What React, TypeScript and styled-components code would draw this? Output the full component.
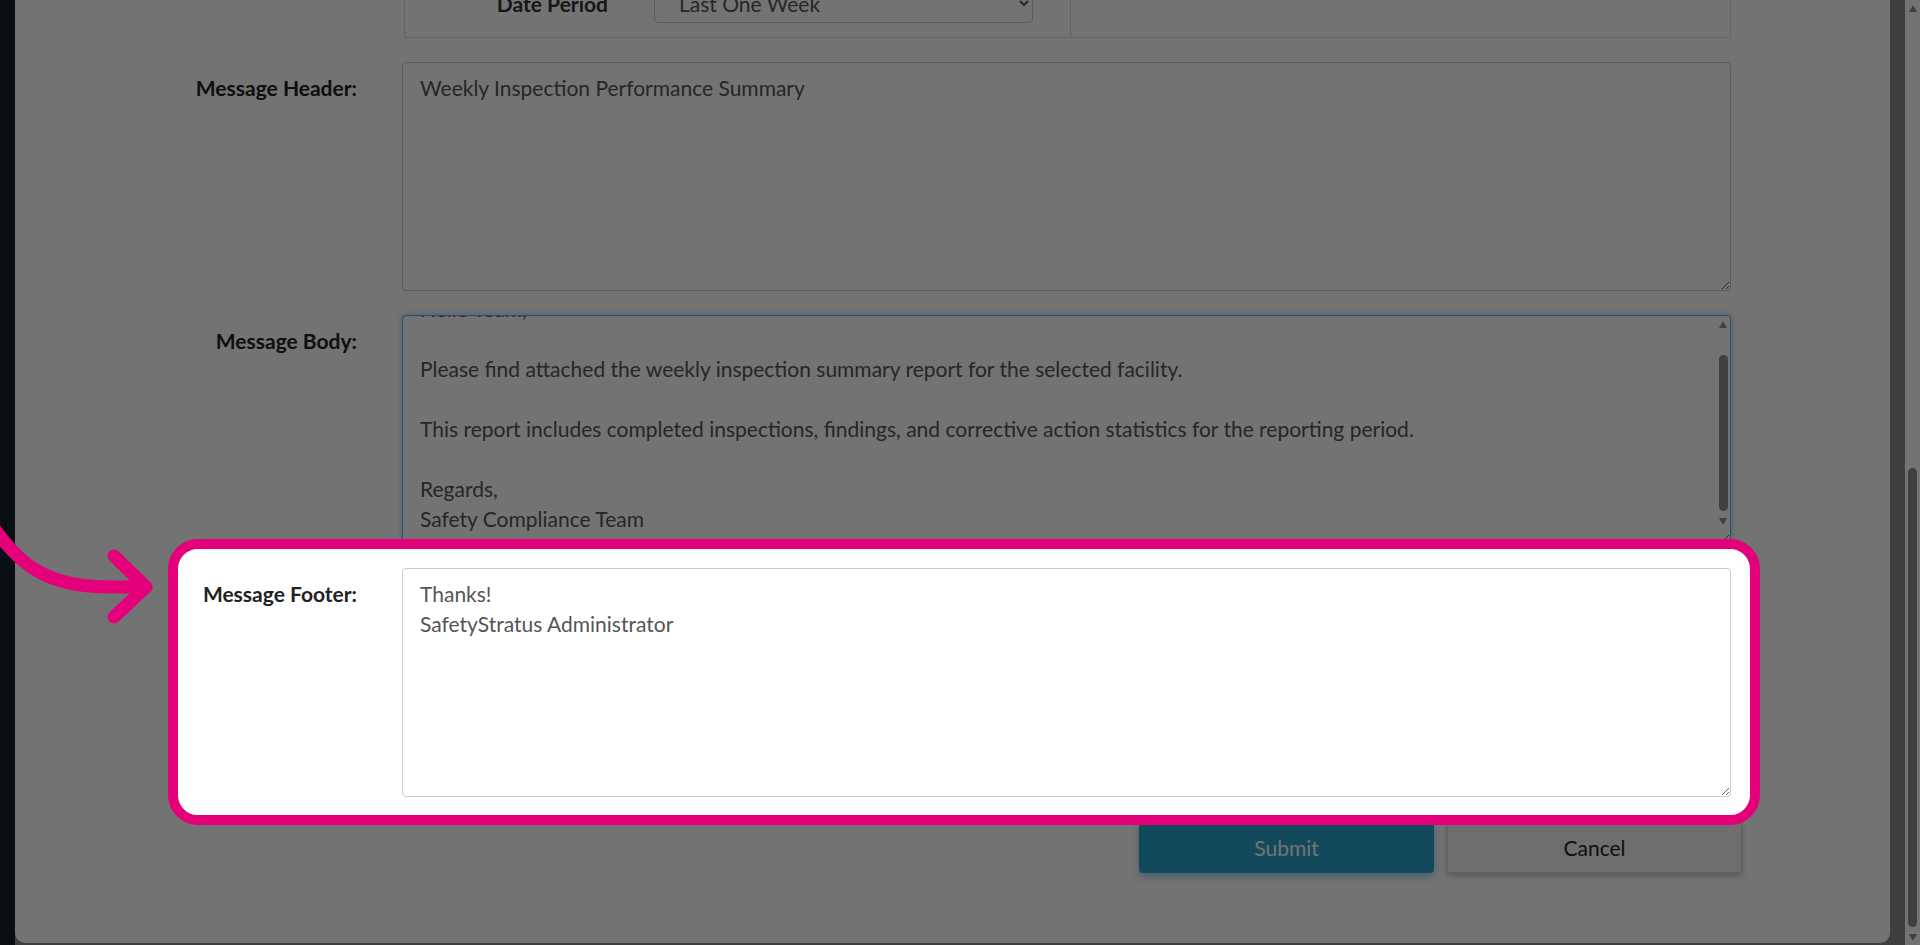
import * as React from 'react';
import styled, { createGlobalStyle, css } from 'styled-components';

const GlobalStyle = createGlobalStyle`
  html, body {
    margin: 0;
    overflow: hidden;
  }
  body {
    font-family: Lato, "Open Sans", "Liberation Sans", sans-serif;
  }
`;

const Shell = styled.div`
  display: flex;
  height: 100vh;
`;

// the page behind the modal: dark sidebar strip on the left, grey content on the right
const Viewport = styled.div`
  flex: 1;
  overflow-y: auto;
  scrollbar-width: none;
  background: linear-gradient(90deg, #17222b 0 15px, #8c8c8c 15px);
`;

const PageScrollbar = styled.div`
  flex: 0 0 15px;
  display: flex;
  flex-direction: column;
  align-items: center;
  background: #fff;
`;

const Arrow = styled.span<{ $down?: boolean; $color: string }>`
  flex: none;
  width: 0;
  height: 0;
  border-left: 4.5px solid transparent;
  border-right: 4.5px solid transparent;
  ${(p) =>
    p.$down
      ? css`
          border-top: 7px solid ${p.$color};
        `
      : css`
          border-bottom: 7px solid ${p.$color};
        `}
`;

const PageThumb = styled.div`
  flex: none;
  width: 9px;
  height: 459px;
  margin: auto 0 7px;
  border-radius: 5px;
  background: #8e8e8e;
`;

const Panel = styled.div`
  margin: 15px 15px 2px;
  padding-bottom: 70px;
  background: #fff;
  border-radius: 10px;
`;

const ModalTitle = styled.div`
  padding: 22px 30px;
  font-size: 24px;
  font-weight: 700;
  color: #222;
  border-bottom: 1px solid #e5e5e5;
`;

const Form = styled.div`
  display: flex;
  flex-direction: column;
  gap: 24px;
  padding: 58px 159px 0 0;
`;

const Row = styled.div`
  display: grid;
  grid-template-columns: 342px 1329px;
  column-gap: 45px;
  align-items: start;
`;

const Spotlight = styled(Row)`
  position: relative;
  z-index: 11;
  grid-template-columns: 179px 1329px;
  margin: -29px -29px -28px 153px;
  padding: 19px 19px 18px 0;
  border: 10px solid #e4007b;
  border-radius: 30px;
  background: #fff;
`;

const Label = styled.label`
  padding-top: 11px;
  font-size: 21px;
  line-height: 30px;
  font-weight: 700;
  color: #222;
  text-align: right;
`;

const fieldBase = css`
  box-sizing: border-box;
  width: 100%;
  border: 1px solid #ccc;
  border-radius: 4px;
  font-family: Lato, "Open Sans", "Liberation Sans", sans-serif;
  font-size: 21px;
  color: #555;
  background: #fff;
`;

const Input = styled.input`
  ${fieldBase};
  height: 40px;
  padding: 0 17px;
`;

const Select = styled.select`
  ${fieldBase};
  height: 40px;
  padding: 0 20px;
`;

const FieldWrap = styled.div`
  position: relative;
`;

const TextArea = styled.textarea<{ $focused?: boolean; $tall?: number }>`
  ${fieldBase};
  display: block;
  height: ${(p) => p.$tall ?? 229}px;
  padding: 10px 17px 9px;
  line-height: 30px;
  outline: none;
  scrollbar-width: none;
  ${(p) =>
    p.$focused &&
    css`
      border-color: #66afe9;
      box-shadow: inset 0 1px 1px rgba(0, 0, 0, 0.075), 0 0 6px rgba(102, 175, 233, 0.6);
    `}
`;

// the body field's own scrollbar, laid over its right edge
const FieldScrollbar = styled.div`
  position: absolute;
  top: 1px;
  right: 1px;
  bottom: 15px;
  width: 14px;
  display: flex;
  flex-direction: column;
  align-items: center;
  padding-top: 5px;
  box-sizing: border-box;
  background: #fff;
  border-top-right-radius: 4px;
`;

const FieldThumb = styled.div`
  width: 9px;
  height: 156px;
  margin: 27px 0 7px;
  border-radius: 5px;
  background: #8e8e8e;
`;

const FilterTable = styled.div`
  margin-left: 2px;
  border: 1px solid #ddd;
  border-bottom: none;
`;

const FilterRow = styled.div`
  display: grid;
  grid-template-columns: 665px 1fr;
  border-bottom: 1px solid #ddd;
`;

const FilterCell = styled.div`
  display: flex;
  align-items: center;
  gap: 46px;
  padding: 14px 37px 14px 0;
`;

const FilterName = styled.div`
  flex: 0 0 203px;
  text-align: right;
  font-size: 21px;
  font-weight: 700;
  color: #333;
`;

const EmptyCell = styled.div`
  border-left: 1px solid #ddd;
`;

const ButtonRow = styled.div`
  display: flex;
  justify-content: flex-end;
  gap: 13px;
  margin-right: -11px;
`;

const Button = styled.button<{ $primary?: boolean }>`
  width: 295px;
  height: 52px;
  border-radius: 4px;
  font-family: Lato, "Open Sans", "Liberation Sans", sans-serif;
  font-size: 21px;
  cursor: pointer;
  ${(p) =>
    p.$primary
      ? css`
          background: #28a4cc;
          color: #fff;
          border: none;
          box-shadow: 0 4px 8px rgba(40, 164, 204, 0.45);
        `
      : css`
          background: #f4f4f4;
          color: #222;
          border: 1px solid #d8d8d8;
          box-shadow: 0 3px 6px rgba(0, 0, 0, 0.25);
        `}
`;

const Dimmer = styled.div`
  position: fixed;
  inset: 0;
  z-index: 10;
  background: rgba(0, 0, 0, 0.549);
  pointer-events: none;
`;

const Pointer = styled.svg`
  position: absolute;
  left: -188px;
  top: -40px;
  width: 170px;
  height: 125px;
  overflow: visible;
`;

const filters: [string, string][] = [
  ['Facility', 'All Facilities'],
  ['Department', 'All Departments'],
  ['Inspection Type', 'All Types'],
  ['Status', 'Completed'],
  ['Date Period', 'Last One Week'],
];

const bodyText = `Hello Team,

Please find attached the weekly inspection summary report for the selected facility.

This report includes completed inspections, findings, and corrective action statistics for the reporting period.

Regards,
Safety Compliance Team`;

const footerText = `Thanks!
SafetyStratus Administrator`;

export default function App() {
  const viewRef = React.useRef<HTMLDivElement>(null);
  const bodyRef = React.useRef<HTMLTextAreaElement>(null);
  const footerRef = React.useRef<HTMLTextAreaElement>(null);

  React.useLayoutEffect(() => {
    const body = bodyRef.current;
    if (body) body.scrollTop = body.scrollHeight;
    const footer = footerRef.current;
    if (footer) {
      footer.focus({ preventScroll: true });
      footer.setSelectionRange(footer.value.length, footer.value.length);
    }
    const view = viewRef.current;
    if (view) view.scrollTop = view.scrollHeight;
  }, []);

  return (
    <>
      <GlobalStyle />
      <Shell>
        <Viewport ref={viewRef}>
          <Panel>
            <ModalTitle>Schedule Report</ModalTitle>
            <Form>
              <Row>
                <Label>Report Name:</Label>
                <Input defaultValue="Weekly Inspection Summary" />
              </Row>
              <Row>
                <Label>Report Type:</Label>
                <Select defaultValue="Inspection Summary">
                  <option>Inspection Summary</option>
                </Select>
              </Row>
              <Row>
                <Label>Frequency:</Label>
                <Select defaultValue="Weekly">
                  <option>Weekly</option>
                </Select>
              </Row>
              <Row>
                <Label>Recipients:</Label>
                <TextArea $tall={120} defaultValue="safety.team@safetystratus.com" />
              </Row>
              <Row>
                <Label>Report Filters:</Label>
                <FilterTable>
                  {filters.map(([name, value]) => (
                    <FilterRow key={name}>
                      <FilterCell>
                        <FilterName>{name}</FilterName>
                        <Select defaultValue={value}>
                          <option>{value}</option>
                        </Select>
                      </FilterCell>
                      <EmptyCell />
                    </FilterRow>
                  ))}
                </FilterTable>
              </Row>
              <Row>
                <Label>Message Header:</Label>
                <TextArea defaultValue="Weekly Inspection Performance Summary" />
              </Row>
              <Row>
                <Label>Message Body:</Label>
                <FieldWrap>
                  <TextArea ref={bodyRef} $focused defaultValue={bodyText} />
                  <FieldScrollbar>
                    <Arrow $color="#8e8e8e" />
                    <FieldThumb />
                    <Arrow $down $color="#8e8e8e" />
                  </FieldScrollbar>
                </FieldWrap>
              </Row>
              <Spotlight>
                <Pointer viewBox="-10 509 170 125">
                  <g fill="none" stroke="#e4007b" strokeWidth="13" strokeLinecap="round" strokeLinejoin="round">
                    <path d="M -10 522 C 20 568, 50 587, 110 587 L 146 587" />
                    <path d="M 114 556 L 146 587 L 114 617" />
                  </g>
                </Pointer>
                <Label>Message Footer:</Label>
                <TextArea ref={footerRef} defaultValue={footerText} />
              </Spotlight>
              <ButtonRow>
                <Button $primary>Submit</Button>
                <Button>Cancel</Button>
              </ButtonRow>
            </Form>
          </Panel>
        </Viewport>
        <PageScrollbar>
          <Arrow $color="#8e8e8e" style={{ marginTop: 5 }} />
          <PageThumb />
          <Arrow $down $color="#8e8e8e" style={{ marginBottom: 4 }} />
        </PageScrollbar>
      </Shell>
      <Dimmer />
    </>
  );
}
